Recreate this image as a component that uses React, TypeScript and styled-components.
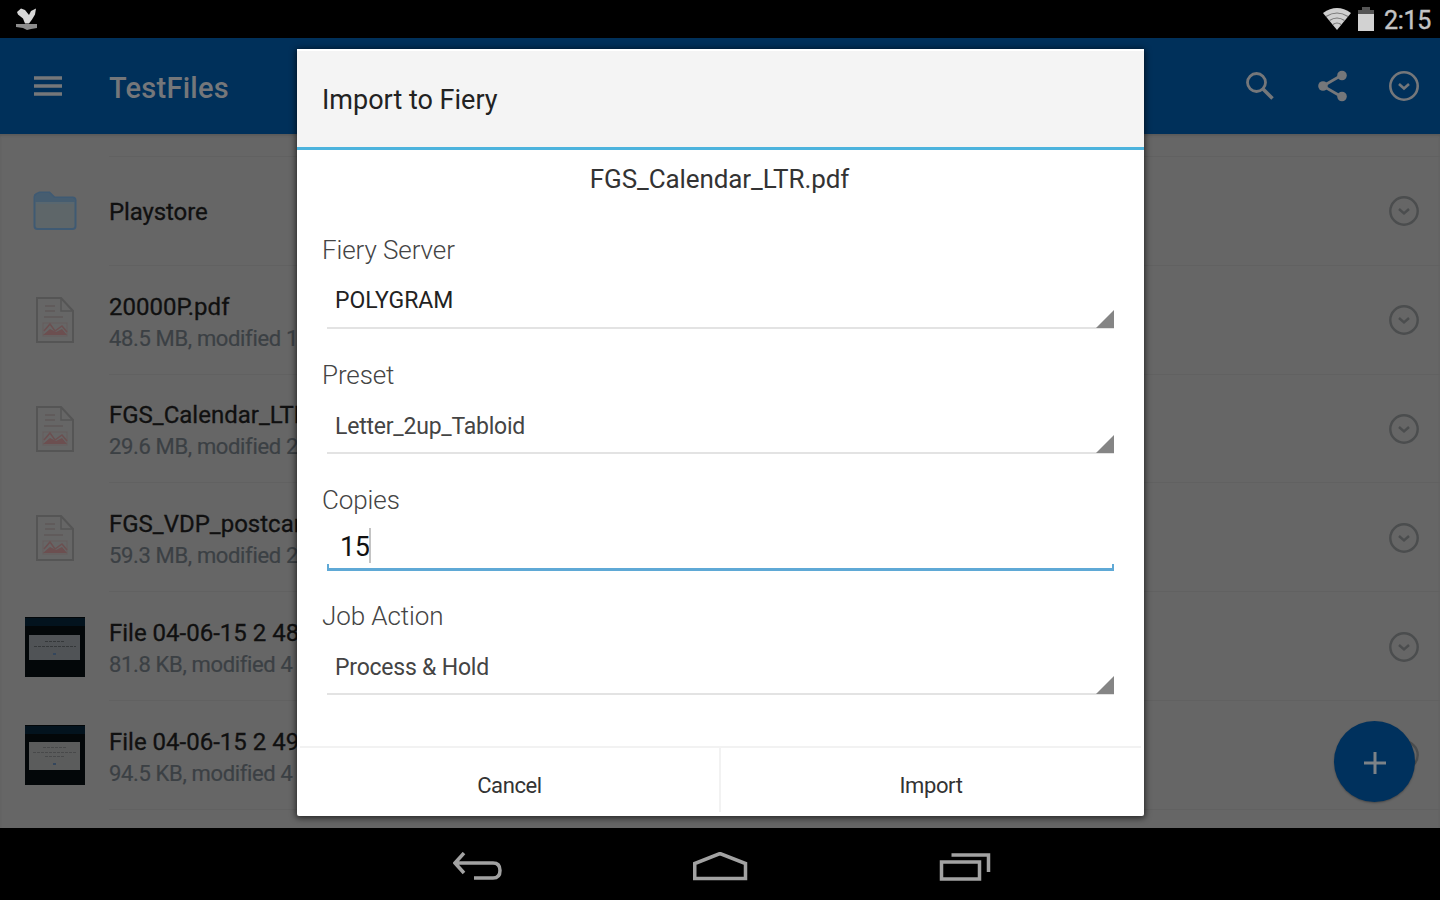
import styled, { createGlobalStyle } from 'styled-components';

const GlobalStyle = createGlobalStyle`
  body {
    margin: 0;
    background: #000;
    font-family: Roboto, "Liberation Sans", sans-serif;
  }

  * {
    box-sizing: border-box;
  }

  svg {
    display: block;
    flex-shrink: 0;
  }
`;

const Screen = styled.div`
  position: relative;
  width: 1440px;
  height: 900px;
  display: flex;
  flex-direction: column;
  background: #000;
  overflow: hidden;
  white-space: nowrap;
`;

const StatusBar = styled.div`
  height: 38px;
  display: flex;
  align-items: center;
  padding: 0 9px 0 14px;
  color: #c4c4c4;
`;

const StatusIcons = styled.div`
  margin-left: auto;
  display: flex;
  align-items: center;
  gap: 6px;
`;

const Clock = styled.span`
  font-size: 25px;
  line-height: 38px;
  letter-spacing: -.3px;
  padding: 3px 0 0 3px;
  -webkit-text-stroke: .4px #c4c4c4;
`;

const Toolbar = styled.header`
  height: 96px;
  flex-shrink: 0;
  display: flex;
  align-items: center;
  padding: 0 20px 0 34px;
  background: #00305a;
  color: #75777a;
`;

const ToolbarTitle = styled.h1`
  margin: 4px 0 0 46px;
  font-size: 29px;
  font-weight: 500;
  letter-spacing: .25px;
`;

const ToolbarActions = styled.div`
  margin-left: auto;
  display: flex;
  align-items: center;
  gap: 40px;

  svg:first-child {
    margin-right: 4px;
  }
`;

const FileList = styled.main`
  height: 694px;
  flex-shrink: 0;
  padding-top: 22px;
  background: #666;
  overflow: hidden;
  box-shadow: inset 0 2px 2px #5b5b5b;
`;

const Row = styled.div`
  height: 108.8px;
  display: flex;
  align-items: center;
`;

const Thumb = styled.div`
  width: 109px;
  padding-top: 2px;
  display: flex;
  justify-content: center;
`;

const RowBody = styled.div`
  flex: 1;
  height: 100%;
  padding: 1px 20px 0 0;
  display: flex;
  align-items: center;
  justify-content: space-between;
  border-top: 1px solid #616161;
`;

const RowText = styled.div`
  display: flex;
  flex-direction: column;
  padding-top: 5px;
`;

const RowTitle = styled.span<{ $single: boolean }>`
  font-size: 24px;
  line-height: 32px;
  margin-top: ${(props) => (props.$single ? -4 : 0)}px;
  letter-spacing: ${(props) => (props.$single ? -.1 : 0)}px;
  color: #101010;
  -webkit-text-stroke: .3px #101010;
`;

const RowInfo = styled.span`
  font-size: 22px;
  line-height: 32px;
  letter-spacing: -.35px;
  color: #3b4044;
  -webkit-text-stroke: .2px #3b4044;
`;

const Fab = styled.button`
  position: absolute;
  left: 1334px;
  top: 721px;
  width: 81px;
  height: 81px;
  padding: 0;
  border: 0;
  border-radius: 50%;
  background: #00315d;
  display: flex;
  align-items: center;
  justify-content: center;
  box-shadow: 0 1px 2px rgba(0, 0, 0, .3);
`;

const NavBar = styled.nav`
  height: 72px;
  display: flex;
  justify-content: center;
  gap: 190px;
  padding: 24px 0 0 3px;
`;

const Overlay = styled.div`
  position: absolute;
  inset: 0;
  display: flex;
  align-items: flex-start;
  justify-content: center;
  padding: 49px 0 0 1px;
`;

const Dialog = styled.section`
  width: 847px;
  height: 767px;
  display: flex;
  flex-direction: column;
  background: #fff;
  border-radius: 2px;
  box-shadow: 0 1px 6px 1px rgba(0, 0, 0, .65);
`;

const DialogHeader = styled.header`
  height: 101px;
  flex-shrink: 0;
  padding-left: 25px;
  border-top: 2px solid #fff;
  border-bottom: 3px solid #4cb3dd;
  background: #f4f4f4;
  color: #222;
  font-size: 27px;
  line-height: 98px;
`;

const FileName = styled.div`
  height: 83px;
  padding-right: 2px;
  line-height: 59px;
  text-align: center;
  font-size: 26px;
  letter-spacing: -.1px;
  color: #333;
`;

const Field = styled.div<{ $gap?: number }>`
  padding: 0 30px 0 25px;
  margin-bottom: ${(props) => props.$gap ?? 29}px;
`;

const Label = styled.div`
  height: 34px;
  line-height: 34px;
  font-size: 26px;
  font-weight: 300;
  letter-spacing: -.1px;
  color: #444;
`;

const Spinner = styled.div<{ $dark?: boolean }>`
  height: 62px;
  margin-left: 5px;
  padding-left: 8px;
  display: flex;
  justify-content: space-between;
  align-items: flex-end;
  border-bottom: 2px solid #e3e3e3;
  font-size: 23px;
  line-height: ${(props) => (props.$dark ? 53 : 51)}px;
  letter-spacing: ${(props) => (props.$dark ? 0 : -.22)}px;
  color: ${(props) => (props.$dark ? '#222' : '#444')};
`;

const Triangle = styled.i`
  width: 18px;
  height: 18px;
  margin-bottom: -1px;
  background: #858585;
  clip-path: polygon(100% 0, 100% 100%, 0 100%);
`;

const CopiesInput = styled.div`
  height: 54px;
  margin-left: 5px;
  padding-left: 13px;
  display: flex;
  flex-direction: column;
  justify-content: flex-end;
`;

const CopiesValue = styled.div`
  display: flex;
  align-items: center;
  height: 34px;
  font-size: 27px;
  letter-spacing: -.3px;
  color: #111;
`;

const Caret = styled.i`
  width: 2px;
  height: 35px;
  margin: -3px 0 0 -1px;
  background: #c4c4c4;
`;

const Bracket = styled.div`
  height: 7px;
  margin-left: -13px;
  border: 2px solid #5fa9d6;
  border-bottom-width: 3px;
  border-top: 0;
`;

const Footer = styled.footer`
  margin-top: auto;
  height: 70px;
  margin-left: 3px;
  margin-right: 3px;
  display: grid;
  grid-template-columns: 419px 1fr;
  border-top: 2px solid #f2f2f2;
`;

const FooterButton = styled.button`
  height: 64px;
  padding: 11px 0 0;
  border: 0;
  background: none;
  font: 400 22px Roboto, sans-serif;
  letter-spacing: -.4px;
  color: #333;

  & + & {
    border-left: 2px solid #f2f2f2;
  }
`;

type IconKind = 'folder' | 'pdf' | 'shot';

interface FileItem {
  name: string;
  info?: string;
  kind: IconKind;
  tall?: boolean;
}

const files: FileItem[] = [
  { name: 'Playstore', kind: 'folder' },
  { name: '20000P.pdf', info: '48.5 MB, modified 1', kind: 'pdf' },
  { name: 'FGS_Calendar_LTR.pdf', info: '29.6 MB, modified 2', kind: 'pdf' },
  { name: 'FGS_VDP_postcard', info: '59.3 MB, modified 2', kind: 'pdf' },
  { name: 'File 04-06-15 2 48', info: '81.8 KB, modified 4', kind: 'shot' },
  { name: 'File 04-06-15 2 49', info: '94.5 KB, modified 4', kind: 'shot', tall: true },
];

function CircleChevron({ color, width = 2.4 }: { color: string; width?: number }) {
  return (
    <svg width="32" height="32" viewBox="0 0 32 32" fill="none" stroke={color} strokeWidth={width}>
      <circle cx="16" cy="16" r="13.7" />
      <path d="M11 14l5 4.500 5-4.500" />
    </svg>
  );
}

function FileIcon({ kind, tall }: { kind: IconKind; tall?: boolean }) {
  if (kind === 'folder') {
    return (
      <svg width="44" height="40" viewBox="0 0 44 40">
        <path d="M1.500 35V6q0-2 2-3l3-1.500h10l5 5h18q3 0 3 3V35q0 3-3 3h-35q-3 0-3-3z" fill="#5e6669" stroke="#3f5a73" strokeWidth="2" />
        <path d="M2 11V6q2-4 5-4h9l5 5h18q3 1 3 4z" fill="#465d70" />
        <path d="M3 12h38" stroke="#59676f" strokeWidth="2" />
      </svg>
    );
  }
  if (kind === 'pdf') {
    return (
      <svg width="38" height="46" viewBox="0 0 38 46" fill="none">
        <path d="M1 1h24l12 13v31H1z" stroke="#555" strokeWidth="2" />
        <path d="M25 1v13h12" stroke="#555" strokeWidth="1.500" />
        <path d="M9 9h10M9 14h10M8 20h19" stroke="#605b5b" strokeWidth="2" />
        <rect x="7" y="26" width="24" height="13" stroke="#665c5c" />
        <path d="M7 38l7-6 6 3 6-3 5 6z" fill="#6c4f50" />
        <path d="M8 34l6-7 5 7 7-5 5 6" stroke="#6c5051" strokeWidth="1.500" />
      </svg>
    );
  }
  return (
    <svg width="60" height="60" viewBox="0 0 60 60">
      <rect width="60" height="60" fill="#030709" />
      <rect y="1" width="60" height="8" fill="#03131e" />
      <rect x="4" y={tall ? 17 : 18} width="51" height={tall ? 28 : 25} fill={tall ? '#5b5c5c' : '#505356'} />
      {tall ? (
        <path d="M18 22.500h24M8 27.500h44M20 31.500h20" stroke="#48494a" strokeDasharray="3 1" />
      ) : (
        <path d="M20 24.500h20M9 29.500h42" stroke="#35383a" strokeDasharray="3 1" />
      )}
      <path d={tall ? 'M28 39h3' : 'M28 37h3'} stroke="#34465c" strokeWidth="2" />
    </svg>
  );
}

function SpinnerField({ label, value, dark, gap }: { label: string; value: string; dark?: boolean; gap?: number }) {
  return (
    <Field $gap={gap}>
      <Label>{label}</Label>
      <Spinner $dark={dark}>
        <span>{value}</span>
        <Triangle />
      </Spinner>
    </Field>
  );
}

export default function App() {
  return (
    <Screen>
      <GlobalStyle />
      <StatusBar>
        <svg width="25" height="24" viewBox="0 0 25 24" fill="#d8d8d8">
          <path d="M3 5l4-3.500 4 1.500 4 5 2-4 5-2.500-1 6-3 5-3 4h-4l-2-5-5-4z" />
          <path d="M2 17h21v4l-6 1-4 1-4-2-7-1z" fill="#8c8c8c" />
        </svg>
        <StatusIcons>
          <svg width="28" height="24" viewBox="0 0 28 24">
            <path d="M0 6Q14-4 28 6L14 23z" fill="#cfcfcf" />
            <path d="M3 9.500q11-7 22 0M6.500 13.500q7.500-5 15 0M10 17.500q4-3 8 0" fill="none" stroke="#777" strokeWidth="1.200" />
          </svg>
          <svg width="18" height="24" viewBox="0 0 18 24">
            <path d="M5 0h8v3h4v5H1V3h4z" fill="#555" />
            <rect x="1" y="7" width="16" height="17" fill="#d2d2d2" />
          </svg>
          <Clock>2:15</Clock>
        </StatusIcons>
      </StatusBar>
      <Toolbar>
        <svg width="29" height="20" viewBox="0 0 29 20" stroke="currentColor" strokeWidth="3.600">
          <path d="M0 2h28M0 10h28M0 18h28" />
        </svg>
        <ToolbarTitle>TestFiles</ToolbarTitle>
        <ToolbarActions>
          <svg width="28" height="28" viewBox="0 0 28 28" fill="none" stroke="currentColor" strokeWidth="2.800">
            <circle cx="10.500" cy="10.500" r="9" />
            <path d="M17 17l9.500 9.500" strokeWidth="3.600" />
          </svg>
          <svg width="30" height="32" viewBox="0 0 30 32" fill="currentColor">
            <path d="M24 5L5 16l19 11" fill="none" stroke="currentColor" strokeWidth="2.800" />
            <circle cx="5" cy="16" r="4.800" />
            <circle cx="24" cy="5.500" r="4.800" />
            <circle cx="24" cy="26.500" r="4.800" />
          </svg>
          <CircleChevron color="currentColor" width={2.6} />
        </ToolbarActions>
      </Toolbar>
      <FileList>
        {files.map((file) => (
          <Row key={file.name}>
            <Thumb>
              <FileIcon kind={file.kind} tall={file.tall} />
            </Thumb>
            <RowBody>
              <RowText>
                <RowTitle $single={!file.info}>{file.name}</RowTitle>
                {file.info && <RowInfo>{file.info}</RowInfo>}
              </RowText>
              <CircleChevron color="#4b4d4e" />
            </RowBody>
          </Row>
        ))}
        <Row>
          <Thumb />
          <RowBody />
        </Row>
      </FileList>
      <Fab aria-label="Add">
        <svg width="22" height="24" viewBox="0 0 22 24" stroke="#7c8287" strokeWidth="3">
          <path d="M0 13h22M11 2v22" />
        </svg>
      </Fab>
      <NavBar>
        <svg width="50" height="30" viewBox="0 0 50 30" fill="none" stroke="#a2a2a2" strokeWidth="3.500">
          <path d="M2 11h38q7 0 7 7.500T40 26H21M11 1L2 11l9 10" />
        </svg>
        <svg width="56" height="30" viewBox="0 0 56 30" fill="none" stroke="#a2a2a2" strokeWidth="3.500">
          <path d="M1.750 26.500V11.500L27 1.500l25.500 10v15z" />
        </svg>
        <svg width="52" height="30" viewBox="0 0 52 30" fill="none" stroke="#a2a2a2" strokeWidth="3.500">
          <path d="M2.500 10h38v17h-38zM12.500 3h37v17" />
        </svg>
      </NavBar>
      <Overlay>
        <Dialog>
          <DialogHeader>Import to Fiery</DialogHeader>
          <FileName>FGS_Calendar_LTR.pdf</FileName>
          <SpinnerField label="Fiery Server" value="POLYGRAM" dark />
          <SpinnerField label="Preset" value="Letter_2up_Tabloid" />
          <Field $gap={28}>
            <Label>Copies</Label>
            <CopiesInput>
              <CopiesValue>
                15
                <Caret />
              </CopiesValue>
              <Bracket />
            </CopiesInput>
          </Field>
          <SpinnerField label="Job Action" value="Process &amp; Hold" gap={0} />
          <Footer>
            <FooterButton>Cancel</FooterButton>
            <FooterButton>Import</FooterButton>
          </Footer>
        </Dialog>
      </Overlay>
    </Screen>
  );
}
